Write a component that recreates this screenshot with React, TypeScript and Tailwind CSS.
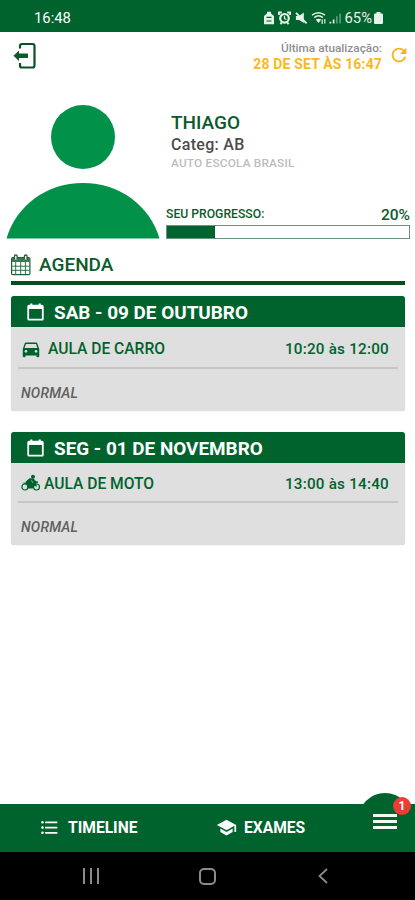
import type { ReactNode } from 'react'
import { MdDirectionsCar, MdFormatListBulleted, MdRefresh, MdSchool } from 'react-icons/md'

interface Lesson {
  date: string
  title: string
  time: string
  kind: string
  icon: ReactNode
  cardClass: string
  rowClass: string
}

function ExitIcon() {
  return (
    <svg viewBox="0 0 24 28" className="h-[28px] w-[24px]" fill="none">
      <path d="M7 6.500V3.800Q7 2 9 2H19.500Q21.500 2 21.500 4V23.500Q21.500 25.500 19.500 25.500H9Q7 25.500 7 23.700V21" stroke="#0b4f27" strokeWidth="2.200" />
      <path d="M0.500 13.700L6 8.500V11.600H15V15.900H6V18.900Z" fill="#0b5a2b" />
    </svg>
  )
}

function WallCalendarIcon() {
  return (
    <svg viewBox="0 0 20 22" className="h-[22px] w-[20px]" fill="none" stroke="#1c6238">
      <rect x="0.600" y="3.600" width="18.300" height="17" rx="1.200" strokeWidth="1.200" />
      <path d="M0.800 4H18.700V8H0.800Z" fill="#3c7853" stroke="none" />
      <path d="M4.700 8V20.500M9.700 8V20.500M14.400 8V20.500M1 12.200H18.500M1 16.300H18.500" strokeWidth="0.900" />
      <path d="M3.500 5.500V2Q3.500 1 4.800 1T6.100 2V5.500M13.400 5.500V2Q13.400 1 14.700 1T16 2V5.500" strokeWidth="1.300" fill="#fff" />
    </svg>
  )
}

function DateIcon() {
  return (
    <svg viewBox="0 0 17 18" className="h-[18px] w-[17px]" fill="none" stroke="currentColor">
      <rect x="1.200" y="2.700" width="14.600" height="14" rx="0.800" strokeWidth="1.800" />
      <path d="M1 4.500H16" strokeWidth="3" />
      <path d="M4.300 0.500V3M12.700 0.500V3" strokeWidth="2" />
    </svg>
  )
}

function MotoIcon() {
  return (
    <svg viewBox="0 0 20 18" className="h-[18px] w-[20px]" fill="none" stroke="#00632e">
      <circle cx="3.900" cy="13" r="3" strokeWidth="1.200" />
      <circle cx="15.500" cy="13" r="3" strokeWidth="1.200" />
      <circle cx="12" cy="2.700" r="2" fill="#00632e" stroke="none" />
      <path d="M4.800 7.500L8.500 4.300L12.500 4.600L15 7.300L17 7.600V8.800L15 9.200L16 12.800L12.500 11.500L11.800 14.500H6.800L6.300 10.600L1 9L4.800 8.600Z" fill="#00632e" stroke="none" />
      <path d="M10.500 6.500L12 8.800" stroke="#dfdfdf" strokeWidth="0.700" />
    </svg>
  )
}

function StatusIcons() {
  return (
    <div className="flex items-center text-[#e6f1ea]">
      <svg viewBox="0 0 12 14" className="h-[14px] w-[12px]">
        <path d="M1 5L4 2.500V0.800H8V2.500L11 5V13.200H1Z" fill="currentColor" />
        <path d="M3.500 6.300H8.500M3.500 10H8.500" stroke="#00632e" strokeWidth="1.200" />
      </svg>
      <svg viewBox="0 0 13 14" className="ml-[3px] h-[14px] w-[13px]" fill="none" stroke="currentColor">
        <circle cx="6.500" cy="7.300" r="4.300" strokeWidth="2.200" />
        <path d="M0.900 4V1.500H3.800M9.200 1.500H12.100V4M2.500 13.200L3.800 11.300M10.500 13.200L9.200 11.300" strokeWidth="1.900" />
        <path d="M6.500 4.800V7.500L8.300 8.500" strokeWidth="1.200" />
      </svg>
      <svg viewBox="0 0 14 14" className="ml-[4px] h-[14px] w-[13px]">
        <path d="M1 4.800H4.500L9.500 1V12.500L4.500 9.200H1Z" fill="currentColor" />
        <path d="M1 1.500L12.500 12.800" stroke="currentColor" strokeWidth="2" />
      </svg>
      <svg viewBox="0 0 16 14" className="ml-[3px] h-[14px] w-[16px]" fill="none" stroke="currentColor" strokeWidth="1.500">
        <path d="M1 4.200Q7.500 -0.800 14 4.200M3.200 6.600Q7.500 3 11.800 6.600" />
        <path d="M7.500 12L4.700 8.600Q7.500 6.800 10.300 8.600Z" fill="currentColor" stroke="none" />
        <path d="M11.200 8.500V13M13.800 8V12.500" strokeWidth="1.200" />
      </svg>
      <svg viewBox="0 0 13 14" className="ml-[2px] h-[14px] w-[12px]" stroke="currentColor" strokeWidth="1.800">
        <path d="M1.500 13V11M5 13V8.500" />
        <path d="M8.500 13V5M12 13V2" opacity="0.400" />
      </svg>
      <span className="ml-[4px] text-[14.8px] leading-[20px]">65%</span>
      <svg viewBox="0 0 11 14" className="ml-[1px] h-[14px] w-[11px]" fill="currentColor">
        <path d="M3.500 1H7.500V2.500H9Q10 2.500 10 3.500V12Q10 13 9 13H2Q1 13 1 12V3.500Q1 2.500 2 2.500H3.500Z" />
      </svg>
    </div>
  )
}

const lessons: Lesson[] = [
  {
    date: 'SAB - 09 DE OUTUBRO',
    title: 'AULA DE CARRO',
    time: '10:20 às 12:00',
    kind: 'NORMAL',
    icon: <MdDirectionsCar className="mr-[6px] size-[22px]" />,
    cardClass: 'h-[115px]',
    rowClass: 'h-[42px] pt-[4px] pl-[2px]',
  },
  {
    date: 'SEG - 01 DE NOVEMBRO',
    title: 'AULA DE MOTO',
    time: '13:00 às 14:40',
    kind: 'NORMAL',
    icon: <span className="mr-[3px] -mt-[2px]"><MotoIcon /></span>,
    cardClass: 'h-[113px]',
    rowClass: 'h-[40px] pt-[4px] pl-[3px]',
  },
]

function LessonCard({ lesson }: { lesson: Lesson }) {
  return (
    <section className={`${lesson.cardClass} overflow-hidden rounded-[3px] bg-[#dfdfdf] shadow-[0_0_1px_#bbb]`}>
      <header className="flex h-[31px] items-center bg-[#00632e] pl-[16px] text-white">
        <DateIcon />
        <h3 className="ml-[10px] pt-[2px] text-[18.9px] leading-[29px] font-bold">{lesson.date}</h3>
      </header>
      <div className={`${lesson.rowClass} mx-[7px] flex items-center border-b-2 border-[#c6c6c6] pr-[9px] text-[15.6px] font-medium text-[#00632e]`}>
        {lesson.icon}
        <span className="pt-[2px]">{lesson.title}</span>
        <span className="ml-auto pt-[1px] text-[15.2px] tracking-[0.25px]">{lesson.time}</span>
      </div>
      <p className="pt-[12px] pl-[10px] text-[14px] leading-[24px] font-medium tracking-[0.2px] text-[#606060] italic">{lesson.kind}</p>
    </section>
  )
}

export default function App() {
  return (
    <div className="flex h-[900px] w-[415px] flex-col overflow-hidden bg-white font-['Roboto',sans-serif]">
      <div className="flex h-[32px] items-center justify-between bg-[#00632e] pt-[3px] pr-[31px] pl-[34px] text-white">
        <span className="text-[14.8px] leading-[20px]">16:48</span>
        <StatusIcons />
      </div>

      <div className="flex h-[60px] items-start justify-between pr-[5px] pl-[13px]">
        <div className="pt-[10px]"><ExitIcon /></div>
        <div className="flex pt-[8px]">
          <div className="text-right">
            <p className="pt-[1px] text-[11.8px] leading-[14px] font-medium text-[#8e8e8e]">Última atualização:</p>
            <p className="pt-[1px] text-[14px] leading-[17px] font-bold tracking-[0.15px] text-[#fbb91b]">28 DE SET ÀS 16:47</p>
          </div>
          <MdRefresh className="mt-[4px] ml-[6px] size-[22px] text-[#fbb117]" />
        </div>
      </div>

      <div className="flex h-[155px] items-start pt-[12px] pr-[5px] pl-[6px]">
        <svg viewBox="0 0 154 135" className="h-[135px] w-[154px] shrink-0" fill="#029148">
          <circle cx="77" cy="33" r="32" />
          <path d="M0.500 134.500C10 102 40 79 77 79S144 102 153.500 134.500Z" />
        </svg>
        <div className="ml-[6px] flex-1">
          <div className="h-[99px] pt-[8px] pl-[5px]">
            <h1 className="text-[19px] leading-[22px] font-medium text-[#0b5a2b]">THIAGO</h1>
            <p className="text-[16px] leading-[22px] font-medium tracking-[0.3px] text-[#4c4c4c]">Categ: AB</p>
            <p className="text-[11.8px] leading-[15px] font-medium tracking-[0.2px] text-[#bcbcbc]">AUTO ESCOLA BRASIL</p>
          </div>
          <div className="flex h-[22px] items-center justify-between font-medium text-[#0b5a2b]">
            <span className="text-[12.2px]">SEU PROGRESSO:</span>
            <span className="pt-[2px] text-[15.5px] leading-[20px]">20%</span>
          </div>
          <div className="h-[14px] border border-[#6c9580]">
            <div className="h-full w-1/5 bg-[#00632e]" />
          </div>
        </div>
      </div>

      <main className="flex-1 pr-[10px] pl-[11px]">
        <div className="flex h-[38px] items-center border-b-[4px] border-[#004f1c] pt-[1px]">
          <WallCalendarIcon />
          <h2 className="ml-[8px] text-[19px] leading-[22px] font-medium text-[#0b5a2b]">AGENDA</h2>
        </div>
        <div className="mt-[11px] flex flex-col gap-[21px]">
          {lessons.map((lesson) => (
            <LessonCard key={lesson.date} lesson={lesson} />
          ))}
        </div>
      </main>

      <nav className="relative flex h-[48px] items-center bg-[#00632e] text-[15.6px] font-bold text-white">
        <div className="flex w-[177px] items-center pl-[39px]">
          <MdFormatListBulleted className="size-[21px]" />
          <span className="ml-[8px] pt-[2px]">TIMELINE</span>
        </div>
        <div className="ml-[39px] flex items-center">
          <MdSchool className="size-[21px]" />
          <span className="ml-[7px] pt-[2px]">EXAMES</span>
        </div>
        {/* Floating menu button rises above the bar */}
        <button className="absolute -top-[11px] left-[358px] flex size-[54px] flex-col items-center gap-[3px] rounded-full bg-[#00632e] pt-[21px]">
          <span className="h-[3px] w-[24px] bg-[#f4f8f5]" />
          <span className="h-[3px] w-[24px] bg-[#f4f8f5]" />
          <span className="h-[3px] w-[24px] bg-[#f4f8f5]" />
        </button>
        <span className="absolute -top-[7px] left-[393px] flex size-[18px] items-center justify-center rounded-full bg-[#ee3b34] text-[12px]">1</span>
      </nav>

      <div className="flex h-[48px] items-center bg-black text-[#8b8b8b]">
        <div className="ml-[83px] flex h-[16px] w-[16px] justify-between">
          <span className="w-[2px] bg-current" />
          <span className="w-[2px] bg-current" />
          <span className="w-[2px] bg-current" />
        </div>
        <div className="ml-[100px] h-[17px] w-[17px] rounded-[5px] border-2 border-current" />
        <svg viewBox="0 0 10 16" className="ml-[102px] h-[16px] w-[10px]" fill="none" stroke="currentColor" strokeWidth="1.800">
          <path d="M9 1L1.500 8L9 15" />
        </svg>
      </div>
    </div>
  )
}
